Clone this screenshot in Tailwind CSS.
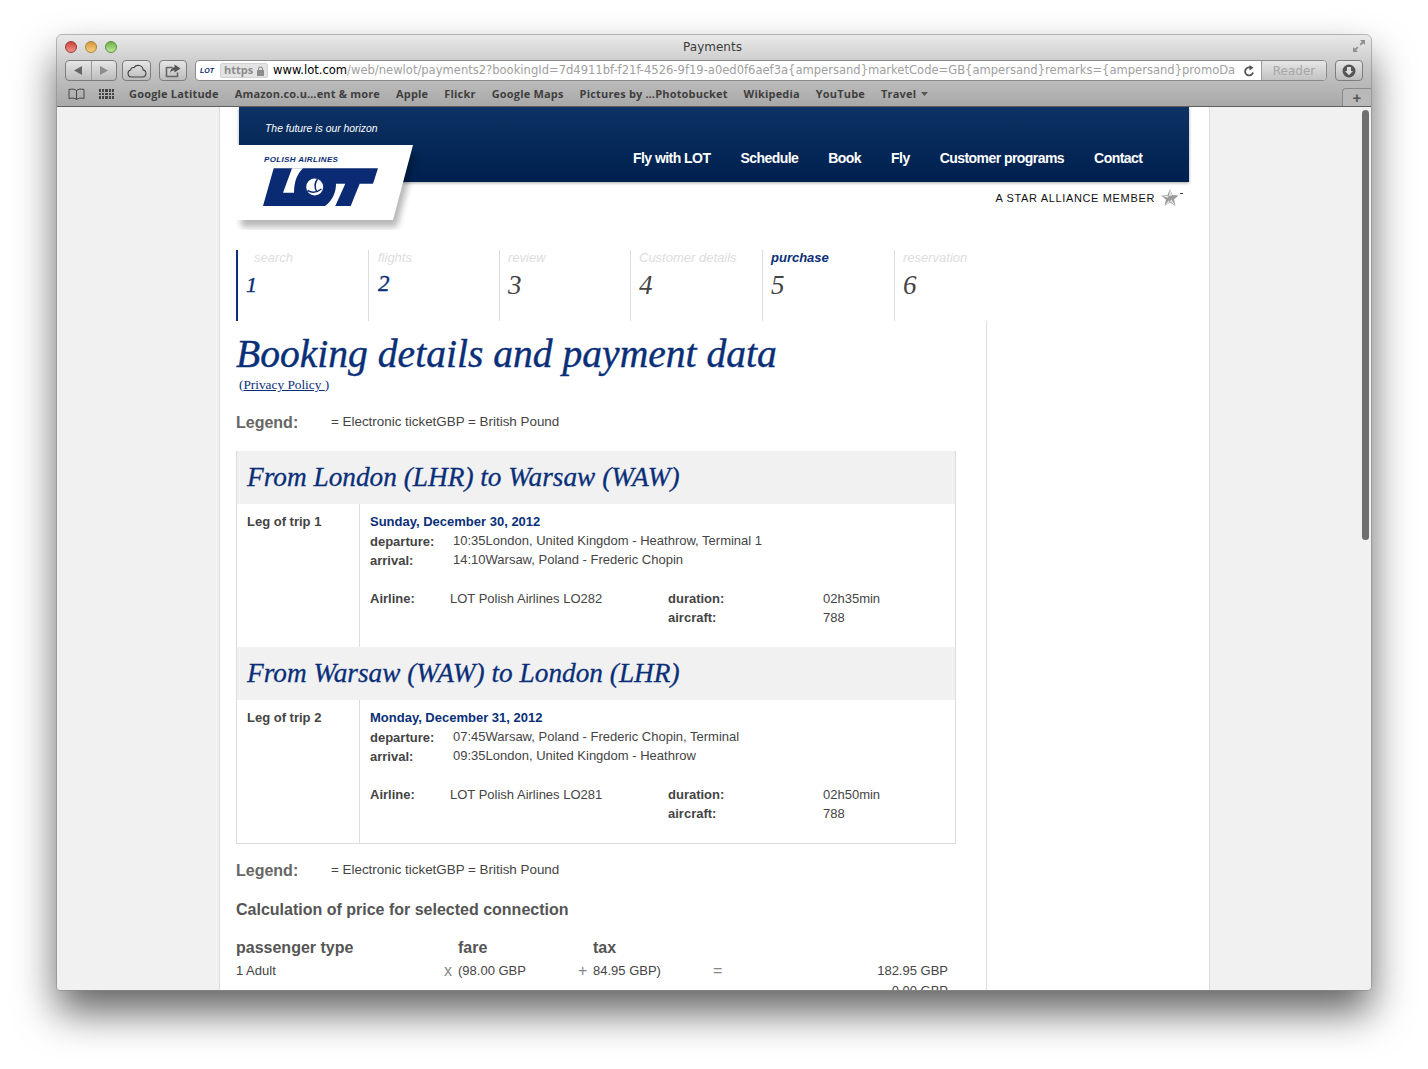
<!DOCTYPE html>
<html lang="en">
<head>
  <meta charset="UTF-8">
  <title>Payments</title>
  <script src="https://cdn.jsdelivr.net/npm/@tailwindcss/browser@4"></script>
</head>
<body class="bg-white w-[1428px] h-[1069px] overflow-hidden pt-[35px] pl-[57px] font-['Liberation_Sans',sans-serif]">
  <div class="w-[1314px] h-[955px] flex flex-col rounded-t-[5px] rounded-b-[4px] overflow-hidden shadow-[0_22px_40px_rgba(0,0,0,0.62)] outline outline-[#8a8a8a]/60">

    <!-- browser chrome -->
    <div class="h-[72px] shrink-0 flex flex-col bg-gradient-to-b from-[#e9e9e9] via-[#c4c4c4] to-[#a8a8a8] border-b border-[#5f5f5f]">
      <div class="h-[23px] flex items-center relative">
        <div class="flex gap-[8px] pl-[8px]">
          <span class="w-[12px] h-[12px] rounded-full border border-[#9c3a34] bg-gradient-to-b from-[#c9423c] to-[#f0928a]"></span>
          <span class="w-[12px] h-[12px] rounded-full border border-[#a8823a] bg-gradient-to-b from-[#d8973a] to-[#f5d27e]"></span>
          <span class="w-[12px] h-[12px] rounded-full border border-[#5d8f3c] bg-gradient-to-b from-[#6eb245] to-[#bfe69a]"></span>
        </div>
        <div class="flex-1 text-center text-[12px] text-[#3c3c3c] font-['DejaVu_Sans',sans-serif] pr-[55px] ml-[-8px]">Payments</div>
        <svg class="absolute right-[5px] top-[4px]" width="14" height="14" viewBox="0 0 14 14" fill="#8f8f8f"><path d="M8 1h5v5l-1.8-1.8-2.4 2.4-1.3-1.3 2.4-2.4zM6 13H1V8l1.8 1.8 2.4-2.4 1.3 1.3-2.4 2.4z"/></svg>
      </div>

      <div class="h-[24px] flex items-start pl-[8px] pt-[2px]">
        <div class="w-[52px] h-[21px] flex rounded-[4px] border border-[#7d7d7d] bg-gradient-to-b from-[#e6e6e6] to-[#bcbcbc]">
          <div class="flex-1 flex items-center justify-center border-r border-[#9a9a9a]"><svg width="10" height="11"><path d="M9 1v9L1 5.500z" fill="#666"/></svg></div>
          <div class="flex-1 flex items-center justify-center"><svg width="10" height="11"><path d="M1 1v9l8-4.500z" fill="#8d8d8d"/></svg></div>
        </div>
        <div class="w-[29px] h-[21px] ml-[5px] flex items-center justify-center rounded-[4px] border border-[#7d7d7d] bg-gradient-to-b from-[#e6e6e6] to-[#bcbcbc]">
          <svg width="21" height="14" viewBox="0 0 21 14" fill="none" stroke="#444" stroke-width="1.100"><path d="M5 13h11.500a3.600 3.600 0 0 0 .6-7.100A5 5 0 0 0 8 3.600 3 3 0 0 0 4.600 6 3.600 3.600 0 0 0 5 13z"/></svg>
        </div>
        <div class="w-[28px] h-[21px] ml-[8px] flex items-center justify-center rounded-[4px] border border-[#7d7d7d] bg-gradient-to-b from-[#e6e6e6] to-[#bcbcbc]">
          <svg width="17" height="14" viewBox="0 0 17 14" fill="none"><path d="M1.500 3.500h6M1.500 3v9.500h11V8.500" stroke="#666" stroke-width="1.600"/><path d="M9.500 0.500l6 4-6 4V6.300C7.500 6.300 6 7.300 5 9c.3-3.200 2-5.400 4.500-5.800z" fill="#555"/></svg>
        </div>
        <div class="w-[1132px] h-[21px] ml-[8px] flex items-center rounded-[4px] border border-[#8a8a8a] bg-white overflow-hidden">
          <span class="w-[24px] shrink-0 pl-[4px] text-[7px] leading-none italic font-black text-[#0a2a6b]">LOT</span>
          <span class="w-[48px] h-[15px] shrink-0 flex items-center gap-[3px] pl-[3px] rounded-[2px] bg-[#e3e3e3] border border-[#d2d2d2] text-[11px] font-bold text-[#8c8c8c] font-['Open_Sans',sans-serif]">https<svg width="9" height="10" viewBox="0 0 9 10"><path d="M2 4V3a2.500 2.500 0 0 1 5 0v1h1v6H1V4zm1 0h3V3a1.500 1.500 0 0 0-3 0z" fill="#8c8c8c"/></svg></span>
          <div class="w-[962px] shrink-0 ml-[5px] pt-[1px] overflow-hidden whitespace-nowrap text-[11.56px] text-[#a0a0a0] font-['DejaVu_Sans',sans-serif]"><span class="text-black">www.lot.com</span>/web/newlot/payments2?bookingId=7d4911bf-f21f-4526-9f19-a0ed0f6aef3a{ampersand}marketCode=GB{ampersand}remarks={ampersand}promoDa</div>
          <svg class="ml-[9px] shrink-0" width="11" height="12" viewBox="0 0 11 12" fill="none"><path d="M9 7.500A4 4 0 1 1 6 2.500" stroke="#555" stroke-width="1.800"/><path d="M5.500 0l4 2.700-4 2.700z" fill="#555"/></svg>
          <div class="flex-1 ml-[6px] h-full flex items-center justify-center border-l border-[#9a9a9a] bg-gradient-to-b from-[#e6e6e6] to-[#c2c2c2] text-[12px] text-[#a6a6a6] font-['DejaVu_Sans',sans-serif]">Reader</div>
        </div>
        <div class="w-[28px] h-[21px] ml-[8px] flex items-center justify-center rounded-[4px] border border-[#7d7d7d] bg-gradient-to-b from-[#e6e6e6] to-[#bcbcbc]">
          <svg width="14" height="14" viewBox="0 0 14 14"><circle cx="7" cy="7" r="6.500" fill="#555"/><path d="M5 3h4v4h2l-4 4.300L3 7h2z" fill="#ddd"/></svg>
        </div>
      </div>

      <div class="h-[24px] flex items-center relative">
        <svg class="ml-[11px]" width="17" height="12" viewBox="0 0 17 12" fill="none" stroke="#444"><path d="M8.500 2.500C7 1 4 .8 1 1.500v9c3-.7 6-.5 7.500 1 1.500-1.500 4.500-1.700 7.500-1v-9c-3-.7-6-.5-7.500 1zm0 0v9"/></svg>
        <div class="ml-[14px] w-[15px] h-[10px] grid grid-cols-5 gap-[1px]">
          <i class="bg-[#444]"></i><i class="bg-[#444]"></i><i class="bg-[#444]"></i><i class="bg-[#444]"></i><i class="bg-[#444]"></i>
          <i class="bg-[#444]"></i><i class="bg-[#444]"></i><i class="bg-[#444]"></i><i class="bg-[#444]"></i><i class="bg-[#444]"></i>
          <i class="bg-[#444]"></i><i class="bg-[#444]"></i><i class="bg-[#444]"></i><i class="bg-[#444]"></i><i class="bg-[#444]"></i>
        </div>
        <div class="ml-[15px] flex gap-[16px] text-[11px] font-bold tracking-[0.18px] text-[#3f3f3f] font-['Open_Sans',sans-serif] whitespace-nowrap">
          <span>Google Latitude</span><span>Amazon.co.u…ent &amp; more</span><span>Apple</span><span>Flickr</span><span>Google Maps</span><span>Pictures by …Photobucket</span><span>Wikipedia</span><span>YouTube</span>
          <span class="flex items-center gap-[5px]">Travel<svg width="7" height="4"><path d="M0 0h7L3.500 4z" fill="#555"/></svg></span>
        </div>
        <div class="absolute right-0 bottom-0 w-[29px] h-[18px] flex items-center justify-center rounded-tl-[4px] border-l border-t border-[#8a8a8a] bg-[#b9b9b9] text-[15px] font-bold leading-none text-[#555]">+</div>
      </div>
    </div>

    <!-- page -->
    <div class="flex-1 min-h-0 relative flex overflow-hidden">
      <div class="w-[162px] shrink-0 bg-[#f1f1f1]"></div>
      <div class="w-[991px] shrink-0 bg-white border-x border-[#dcdcdc] relative pl-[16px] text-[13px] text-[#444]">

        <!-- site header -->
        <div class="ml-[3px] w-[950px] h-[75px] bg-gradient-to-b from-[#0e3263] to-[#00204f] shadow-[0_1px_3px_rgba(0,0,0,0.35)] pt-[15px] pl-[26px]">
          <div class="text-[10.4px] leading-[13px] italic text-white">The future is our horizon</div>
          <div class="mt-[14px] pl-[368px] flex gap-[30px] text-[14px] leading-[18px] font-bold tracking-[-0.55px] text-white whitespace-nowrap">
            <span>Fly with LOT</span><span>Schedule</span><span>Book</span><span>Fly</span><span>Customer programs</span><span>Contact</span>
          </div>
        </div>

        <!-- logo overlaps the header -->
        <div class="absolute left-[16px] top-[38px] w-[185px] h-[85px]">
          <svg width="185" height="85" viewBox="0 0 185 85">
            <defs><filter id="logoShadow" x="-10%" y="-10%" width="125%" height="125%"><feGaussianBlur stdDeviation="3"/></filter></defs>
            <path d="M2 5H177L158 79H2z" fill="#000" opacity=".28" filter="url(#logoShadow)" transform="translate(3 3)"/>
            <path d="M0 0H177L157 75H0z" fill="#fff"/>
            <path d="M37.700 23.300H142L137 38.700H123.700L114.700 61H27z" fill="#0a2b73"/>
            <path d="M56 23.300L47 47.700H58C58 37 61 29 67 23.300z" fill="#fff"/>
            <path d="M100 38.700H109.300L99.300 61H89C97 55 100 47 100 38.700z" fill="#fff"/>
            <circle cx="78.700" cy="42" r="8.500" fill="#fff"/>
            <path d="M81.500 34C78.500 38 78.500 43 81 47M71.500 45.500C76 48 81 47.500 85.500 44" fill="none" stroke="#0a2b73" stroke-width="1.500"/>
            <text x="28" y="17" font-size="8" font-weight="700" font-style="italic" fill="#0a2b73" letter-spacing=".35" font-family="Liberation Sans, sans-serif">POLISH AIRLINES</text>
          </svg>
        </div>

        <!-- star alliance -->
        <div class="h-[68px] pt-[7px] pr-[25px] flex justify-end items-start gap-[5px]">
          <span class="text-[11px] leading-[18px] tracking-[0.65px] text-[#111]">A STAR ALLIANCE MEMBER</span>
          <svg width="24" height="18" viewBox="0 0 24 18"><path d="M10 0l2.500 6 6 .5-4.500 4 1.500 6.500-5.500-3.500L4.500 17 6 10.500 1 6.500l6.500-.5z" fill="#9a9a9a"/><path d="M10 0l-1 7 3.200-.6zM1 6.500l7 2.200 .6-2zM15.500 17l-4-6.500-1.500 1.500zM4.500 17l4-5.500 1.200 1.600z" fill="#e8e8e8"/><rect x="20" y="4" width="3" height="1" fill="#444"/></svg>
        </div>

        <!-- steps -->
        <div class="grid grid-cols-[132px_131px_131px_132px_132px_92px] w-[750px] h-[71px] font-['Liberation_Serif',serif]">
          <div class="border-l-2 border-[#0a2f78] pt-[1px]">
            <div class="pl-[16px] text-[13px] leading-[14px] italic text-[#dddddd] font-['Liberation_Sans',sans-serif]">search</div>
            <div class="pl-[8px] mt-[5px] text-[22px] leading-[30px] italic text-[#0a2f78] [-webkit-text-stroke:0.4px_#0a2f78]">1</div>
          </div>
          <div class="border-l border-[#dcdcdc] pt-[1px] pl-[9px]">
            <div class="text-[13px] leading-[14px] italic text-[#dddddd] font-['Liberation_Sans',sans-serif]">flights</div>
            <div class="mt-[4px] text-[23px] leading-[30px] italic text-[#0a2f78] [-webkit-text-stroke:0.4px_#0a2f78]">2</div>
          </div>
          <div class="border-l border-[#dcdcdc] pt-[1px] pl-[8px]">
            <div class="text-[13px] leading-[14px] italic text-[#dddddd] font-['Liberation_Sans',sans-serif]">review</div>
            <div class="mt-[5px] text-[27px] leading-[30px] italic text-[#444]">3</div>
          </div>
          <div class="border-l border-[#dcdcdc] pt-[1px] pl-[8px]">
            <div class="text-[13px] leading-[14px] italic text-[#dddddd] font-['Liberation_Sans',sans-serif]">Customer details</div>
            <div class="mt-[5px] text-[27px] leading-[30px] italic text-[#444]">4</div>
          </div>
          <div class="border-l border-[#dcdcdc] pt-[1px] pl-[8px]">
            <div class="text-[13px] leading-[14px] italic font-bold text-[#0a2f78] font-['Liberation_Sans',sans-serif]">purchase</div>
            <div class="mt-[5px] text-[27px] leading-[30px] italic text-[#444]">5</div>
          </div>
          <div class="border-l border-[#dcdcdc] pt-[1px] pl-[8px] whitespace-nowrap">
            <div class="text-[13px] leading-[14px] italic text-[#dddddd] font-['Liberation_Sans',sans-serif]">reservation</div>
            <div class="mt-[5px] text-[27px] leading-[30px] italic text-[#444]">6</div>
          </div>
        </div>

        <!-- main column -->
        <div class="w-[751px] h-[700px] border-r border-[#dcdcdc]">
          <h1 class="h-[56px] pt-[9px] text-[39.6px] leading-[48px] italic text-[#0a2f78] [-webkit-text-stroke:0.4px_#0a2f78] font-['Liberation_Serif',serif] whitespace-nowrap">Booking details and payment data</h1>
          <div class="h-[16px] pl-[3px] text-[13.3px] leading-[16px] text-[#0a2f78] font-['Liberation_Serif',serif]">(<a class="underline">Privacy Policy </a>)</div>

          <div class="h-[58px] pt-[20px] flex items-start">
            <span class="w-[95px] text-[16px] leading-[20px] font-bold text-[#666]">Legend:</span>
            <span class="text-[13.4px] leading-[18px]">= Electronic ticketGBP = British Pound</span>
          </div>

          <div class="w-[720px] border-x border-b border-[#dcdcdc]">
            <div class="h-[53px] pl-[10px] flex items-center bg-[#f1f1f1] text-[27.3px] italic text-[#0a2f78] [-webkit-text-stroke:0.3px_#0a2f78] font-['Liberation_Serif',serif]">From London (LHR) to Warsaw (WAW)</div>
            <div class="h-[143px] flex leading-[19px]">
              <div class="w-[123px] pl-[10px] pt-[8px] border-r border-[#dcdcdc] font-bold">Leg of trip 1</div>
              <div class="pl-[10px] pt-[8px] flex-1">
                <div class="font-bold text-[#0a2f78]">Sunday, December 30, 2012</div>
                <div class="flex"><span class="w-[83px] font-bold pt-[2px] leading-[17px]">departure:</span><span>10:35London, United Kingdom - Heathrow, Terminal 1</span></div>
                <div class="flex"><span class="w-[83px] font-bold pt-[2px] leading-[17px]">arrival:</span><span>14:10Warsaw, Poland - Frederic Chopin</span></div>
                <div class="grid grid-cols-[80px_218px_155px_1fr] mt-[20px]">
                  <span class="font-bold">Airline:</span><span>LOT Polish Airlines LO282</span><span class="font-bold">duration:</span><span>02h35min</span>
                  <span></span><span></span><span class="font-bold">aircraft:</span><span>788</span>
                </div>
              </div>
            </div>
            <div class="h-[53px] pl-[10px] flex items-center bg-[#f1f1f1] text-[27.3px] italic text-[#0a2f78] [-webkit-text-stroke:0.3px_#0a2f78] font-['Liberation_Serif',serif]">From Warsaw (WAW) to London (LHR)</div>
            <div class="h-[143px] flex leading-[19px]">
              <div class="w-[123px] pl-[10px] pt-[8px] border-r border-[#dcdcdc] font-bold">Leg of trip 2</div>
              <div class="pl-[10px] pt-[8px] flex-1">
                <div class="font-bold text-[#0a2f78]">Monday, December 31, 2012</div>
                <div class="flex"><span class="w-[83px] font-bold pt-[2px] leading-[17px]">departure:</span><span>07:45Warsaw, Poland - Frederic Chopin, Terminal</span></div>
                <div class="flex"><span class="w-[83px] font-bold pt-[2px] leading-[17px]">arrival:</span><span>09:35London, United Kingdom - Heathrow</span></div>
                <div class="grid grid-cols-[80px_218px_155px_1fr] mt-[20px]">
                  <span class="font-bold">Airline:</span><span>LOT Polish Airlines LO281</span><span class="font-bold">duration:</span><span>02h50min</span>
                  <span></span><span></span><span class="font-bold">aircraft:</span><span>788</span>
                </div>
              </div>
            </div>
          </div>

          <div class="h-[36px] pt-[17px] flex items-start">
            <span class="w-[95px] text-[16px] leading-[20px] font-bold text-[#666]">Legend:</span>
            <span class="text-[13.4px] leading-[18px]">= Electronic ticketGBP = British Pound</span>
          </div>
          <div class="h-[54px] pt-[20px] text-[16px] leading-[20px] font-bold text-[#555]">Calculation of price for selected connection</div>
          <div class="grid grid-cols-[222px_135px_1fr] w-[712px] h-[24px] pt-[4px] text-[16px] leading-[20px] font-bold text-[#555]">
            <span>passenger type</span><span>fare</span><span>tax</span>
          </div>
          <div class="grid grid-cols-[208px_14px_120px_15px_120px_1fr] w-[712px] leading-[20px] pt-[3px]">
            <span>1 Adult</span><span class="text-[16px] text-[#888]">x</span><span>(98.00 GBP</span><span class="text-[16px] text-[#888]">+</span><span>84.95 GBP)</span>
            <span class="flex justify-between"><span class="text-[16px] text-[#888]">=</span><span>182.95 GBP</span></span>
            <span></span><span></span><span></span><span></span><span class="pl-[104px] pt-[5px] whitespace-nowrap">tax fee</span>
            <span class="text-right">0.00 GBP</span>
          </div>
        </div>
      </div>
      <div class="flex-1 bg-[#f1f1f1]"></div>
      <div class="absolute right-[2px] top-[3px] w-[7px] h-[430px] rounded-full bg-[#6f6f6f]"></div>
    </div>
  </div>
</body>
</html>
